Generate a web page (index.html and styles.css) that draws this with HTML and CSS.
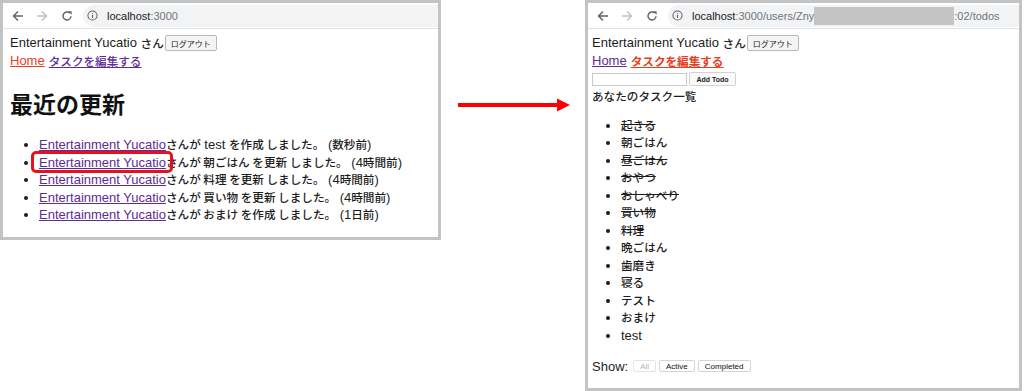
FILE: index.html
```html
<!DOCTYPE html>
<html lang="ja">
<head>
  <meta charset="UTF-8">
  <title>Todo before / after</title>
  <link rel="stylesheet" href="styles.css">
</head>
<body>
  <div class="window window-home">
    <div class="toolbar">
      <svg class="nav" width="12" height="12" viewBox="0 0 12 12"><path d="M11 6H1.5M6 1.5L1.5 6 6 10.5" fill="none" stroke="#5f6368" stroke-width="1.4"/></svg>
      <svg class="nav fwd" width="12" height="12" viewBox="0 0 12 12"><path d="M1 6h9.5M6 1.5L10.5 6 6 10.5" fill="none" stroke="#bdc1c6" stroke-width="1.4"/></svg>
      <svg class="nav reload" width="12" height="12" viewBox="0 0 12 12"><path d="M10 6.2A4 4 0 1 1 8.6 2.9" fill="none" stroke="#5f6368" stroke-width="1.4"/><path d="M7 1.2h3.6v3.6z" fill="#5f6368"/></svg>
      <div class="omnibox">
        <svg class="info" width="11" height="11" viewBox="0 0 12 12"><circle cx="6" cy="6" r="5" fill="none" stroke="#5f6368" stroke-width="1.1"/><path d="M6 5.3v3.4M6 3.2v1" stroke="#5f6368" stroke-width="1.2"/></svg>
        <span class="host">localhost</span><span class="path">:3000</span>
      </div>
    </div>
    <div class="page">
      <div class="user">Entertainment Yucatio&nbsp;<span class="ja">さん</span><button class="logout">ログアウト</button></div>
      <div class="links"><a class="current" href="#">Home</a> <a class="ja" href="#">タスクを編集する</a></div>
      <h1>最近の更新</h1>
      <ul class="updates">
        <li><a href="#">Entertainment Yucatio</a><span class="ja">さんが</span> test <span class="ja">を作成 しました。</span> (<span class="ja">数秒前</span>)</li>
        <li><a class="marked" href="#">Entertainment Yucatio</a><span class="ja">さんが 朝ごはん を更新 しました。</span> (4<span class="ja">時間前</span>)</li>
        <li><a href="#">Entertainment Yucatio</a><span class="ja">さんが 料理 を更新 しました。</span> (4<span class="ja">時間前</span>)</li>
        <li><a href="#">Entertainment Yucatio</a><span class="ja">さんが 買い物 を更新 しました。</span> (4<span class="ja">時間前</span>)</li>
        <li><a href="#">Entertainment Yucatio</a><span class="ja">さんが おまけ を作成 しました。</span> (1<span class="ja">日前</span>)</li>
      </ul>
    </div>
  </div>

  <div class="arrow">
    <svg width="112" height="14" viewBox="0 0 112 14"><rect x="0" y="5" width="100" height="4" fill="#f00"/><polygon points="99,0.5 112,7 99,13.5" fill="#f00"/></svg>
  </div>

  <div class="window window-todos">
    <div class="toolbar">
      <svg class="nav" width="12" height="12" viewBox="0 0 12 12"><path d="M11 6H1.5M6 1.5L1.5 6 6 10.5" fill="none" stroke="#5f6368" stroke-width="1.4"/></svg>
      <svg class="nav fwd" width="12" height="12" viewBox="0 0 12 12"><path d="M1 6h9.5M6 1.5L10.5 6 6 10.5" fill="none" stroke="#bdc1c6" stroke-width="1.4"/></svg>
      <svg class="nav reload" width="12" height="12" viewBox="0 0 12 12"><path d="M10 6.2A4 4 0 1 1 8.6 2.9" fill="none" stroke="#5f6368" stroke-width="1.4"/><path d="M7 1.2h3.6v3.6z" fill="#5f6368"/></svg>
      <div class="omnibox">
        <svg class="info" width="11" height="11" viewBox="0 0 12 12"><circle cx="6" cy="6" r="5" fill="none" stroke="#5f6368" stroke-width="1.1"/><path d="M6 5.3v3.4M6 3.2v1" stroke="#5f6368" stroke-width="1.2"/></svg>
        <span class="host">localhost</span><span class="path">:3000/users/Zny</span><span class="redacted"></span><span class="path">:02/todos</span>
      </div>
    </div>
    <div class="page">
      <div class="user">Entertainment Yucatio&nbsp;<span class="ja">さん</span><button class="logout">ログアウト</button></div>
      <div class="links"><a href="#">Home</a> <a class="current bold ja" href="#">タスクを編集する</a></div>
      <form class="add-form"><input class="new-todo" type="text"><button class="add" type="button">Add Todo</button></form>
      <div class="todo-title ja">あなたのタスク一覧</div>
      <ul class="todos">
        <li class="done"><span class="ja">起きる</span></li>
        <li><span class="ja">朝ごはん</span></li>
        <li class="done"><span class="ja">昼ごはん</span></li>
        <li class="done"><span class="ja">おやつ</span></li>
        <li class="done"><span class="ja">おしゃべり</span></li>
        <li class="done"><span class="ja">買い物</span></li>
        <li class="done"><span class="ja">料理</span></li>
        <li><span class="ja">晩ごはん</span></li>
        <li><span class="ja">歯磨き</span></li>
        <li><span class="ja">寝る</span></li>
        <li><span class="ja">テスト</span></li>
        <li><span class="ja">おまけ</span></li>
        <li>test</li>
      </ul>
      <div class="filters">
        <span class="show">Show:</span>
        <button class="filter" disabled>All</button>
        <button class="filter">Active</button>
        <button class="filter">Completed</button>
      </div>
    </div>
  </div>
</body>
</html>
```

FILE: styles.css
```css
body {
  margin: 0;
  width: 1024px;
  height: 391px;
  display: flex;
  align-items: flex-start;
  background: #fff;
  font-family: "Liberation Sans", "Noto Sans CJK JP", sans-serif;
  font-size: 13px;
  color: #1d1d1d;
  overflow: hidden;
}

/* japanese runs sit a little smaller than the latin text */
.ja {
  font-family: "Noto Sans CJK JP", sans-serif;
  font-size: 11.6px;
  font-weight: 500;
}

.window {
  box-sizing: border-box;
  border: 3px solid #c3c3c3;
  background: #fff;
}
.window-home {
  width: 441px;
  height: 240px;
}
.window-todos {
  width: 437px;
  height: 391px;
  margin-left: 15px;
}

.arrow {
  margin-left: 17px;
  margin-top: 98px;
  line-height: 0;
}

/* browser chrome */
.toolbar {
  height: 25px;
  display: flex;
  align-items: center;
  padding-left: 9px;
  border-bottom: 1px solid #e3e3e3;
}
.nav {
  margin-right: 12px;
}
.reload {
  margin-left: 1px;
  margin-right: 10px;
}
.omnibox {
  flex: 1;
  height: 22px;
  display: flex;
  align-items: center;
  background: #f1f3f4;
  border-radius: 11px 0 0 11px;
  padding-left: 4px;
  font-size: 11px;
  white-space: nowrap;
  overflow: hidden;
}
.info {
  margin-right: 9px;
}
.host {
  color: #202124;
}
.path {
  color: #70757a;
}
.redacted {
  display: inline-block;
  width: 140px;
  height: 18px;
  background: #c4c4c4;
}

/* page content */
.window-home .page {
  padding: 5px 7px;
}
.window-todos .page {
  padding: 5px 4px;
}
.user,
.links,
.add-form {
  height: 18px;
  line-height: 18px;
  display: flex;
  align-items: center;
  white-space: nowrap;
}
.links a {
  margin-right: 4px;
}
a {
  color: #5e2c95;
}
a.current {
  color: #e5401e;
}
a.bold {
  font-weight: bold;
}
.logout {
  width: 52px;
  height: 16px;
  margin-left: 1px;
  padding: 0;
  font-family: "Noto Sans CJK JP", sans-serif;
  font-size: 8px;
  color: #222;
  background: #f4f4f4;
  border: 1px solid #b8b8b8;
  border-radius: 2px;
}

h1 {
  margin: 19px 0;
  font-family: "Noto Sans CJK JP", sans-serif;
  font-size: 23px;
  line-height: 28px;
  font-weight: bold;
  color: #111;
}

ul {
  margin: 0;
  padding-left: 29px;
}
.updates li {
  line-height: 17.6px;
  white-space: nowrap;
}
a.marked {
  position: relative;
}
a.marked::after {
  content: "";
  position: absolute;
  top: -4px;
  bottom: -3px;
  left: -8px;
  right: -7px;
  border: 3px solid #e8101a;
  border-radius: 5px;
}

.add-form {
  margin: 0;
}
.new-todo {
  box-sizing: border-box;
  width: 95px;
  height: 13px;
  margin: 0;
  padding: 0;
  border: 1px solid #c9c9c9;
}
.add {
  box-sizing: border-box;
  width: 47px;
  height: 14px;
  margin-left: 2px;
  padding: 0;
  font-family: "Liberation Sans", sans-serif;
  font-size: 7px;
  font-weight: bold;
  color: #222;
  background: #fafafa;
  border: 1px solid #d2d2d2;
  border-radius: 2px;
}
.todo-title {
  line-height: 17.5px;
}
.todos {
  margin-top: 11px;
}
.todos li {
  line-height: 17.5px;
}
.todos li.done {
  text-decoration: line-through;
}

.filters {
  margin-top: 13px;
  height: 18px;
  display: flex;
  align-items: center;
}
.show {
  margin-right: 5px;
}
.filter {
  box-sizing: border-box;
  height: 12px;
  margin-right: 3px;
  padding: 0 6px;
  font-family: "Liberation Sans", sans-serif;
  font-size: 8px;
  color: #111;
  background: #fff;
  border: 1px solid #d4d4d4;
  border-radius: 2px;
}
.filter:disabled {
  color: #b8b8b8;
  border-color: #e4e4e4;
}
```
